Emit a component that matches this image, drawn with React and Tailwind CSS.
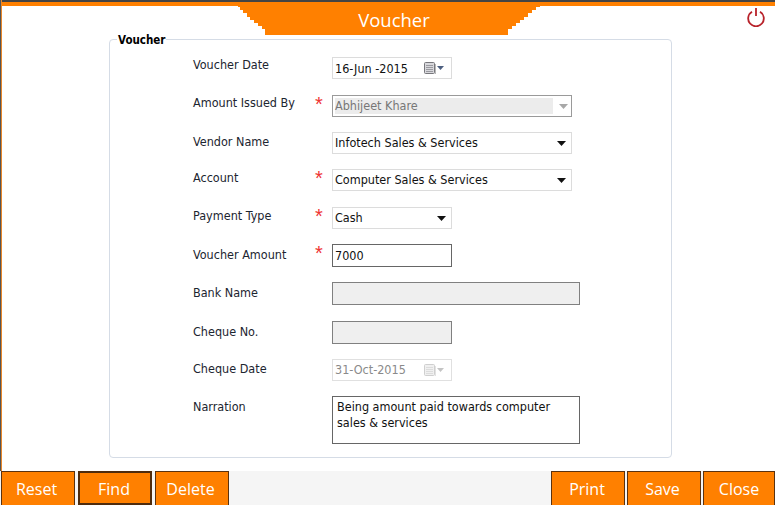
function Caret({ className = "", w = 9, h = 5 }) {
  return <svg width={w} height={h} viewBox="0 0 9 5" preserveAspectRatio="none" className={className}><path d="M0 0h9L4.5 5z" fill="currentColor" /></svg>;
}
function Cal({ muted }) {
  return (
    <svg width="14" height="14" viewBox="0 0 14 14">
      <rect x="1.5" y="1.5" width="10" height="11" rx="1" fill={muted ? "#f0f0f0" : "#d8d8dc"} stroke={muted ? "#cfcfcf" : "#77777c"} />
      <path d="M3 4.5h7M3 6.5h7M3 8.5h7M3 10.5h7" stroke={muted ? "#dcdcdc" : "#9a9aa0"} />
      <path d="M12.5 3v10" stroke={muted ? "#e2e2e2" : "#b8b8b8"} />
    </svg>
  );
}
function Star() {
  return <span className="absolute left-[-17px] top-[-2px] text-[20px] leading-[22px] text-[#ee3333] font-['Liberation_Sans',sans-serif]">*</span>;
}
function Row({ label, star, top, labelTop, children }) {
  return (
    <div className={`flex ${top}`}>
      <div className={`w-[139px] shrink-0 relative ${labelTop}`}>{label}</div>
      <div className="relative">
        {star && <Star />}
        {children}
      </div>
    </div>
  );
}
function Btn({ children, active, className = "" }) {
  return (
    <button className={`h-[34px] bg-[#ff8000] text-white text-[16px] font-['Open_Sans',sans-serif] ${active ? "border-2 border-[#4f2c0e]" : "border-t border-x border-[#5a3210]"} ${className}`}>
      {children}
    </button>
  );
}
export default function App() {
  return (
    <div className="w-[775px] h-[505px] overflow-hidden flex flex-col bg-white font-['DejaVu_Sans_Condensed','DejaVu_Sans',sans-serif] text-[12.5px] leading-[16px] text-[#1c2530]">
      <div className="flex-1 flex flex-col border-l border-[#555555]">
        <div className="flex-1 flex flex-col border-l border-[#e8872a]">
          <header className="shrink-0 relative">
            <div className="h-[2px] bg-[#444444]" />
            <div className="h-[4px] bg-[#ff8000]" />
            <div className="flex justify-center">
              <div className="relative w-[302px] h-[29px] flex items-center justify-center text-white text-[18.5px] font-['Open_Sans',sans-serif] ml-[1px]">
                <svg width="302" height="29" viewBox="0 0 302 29" className="absolute inset-0">
                  <path d="M0 0H302V1H298V4H294V7H290V11H286V14H282V17H278V20H274V23H270V29H27V23H24V20H20V17H16V14H12V11H9V7H5V4H2V1H0Z" fill="#ff8000" />
                </svg>
                <span className="relative top-[-1px] left-[5px]">Voucher</span>
              </div>
            </div>
            <svg width="20" height="20" viewBox="0 0 20 20" className="absolute right-[9px] top-[7px]" fill="none" stroke="#b8222a" strokeWidth="1.8">
              <path d="M6 4.8A7.8 7.8 0 1 0 14 4.8" />
              <path d="M10 1v8" />
            </svg>
          </header>

          <main className="flex-1 pl-[107px] pt-[4px]">
            <fieldset className="w-[563px] h-[419px] border border-[#d5dce6] rounded-[4px] relative pl-[83px] pt-[17px]">
              <span className="absolute left-[7px] top-[-7px] bg-white px-[1px] font-bold text-[11.5px] leading-[14px] text-black">Voucher</span>

              <Row label="Voucher Date" top="" labelTop="top-[0px]">
                <div className="w-[120px] h-[22px] border border-[#dcdcdc] flex items-center justify-between pl-[2px] pr-[7px] text-[#111]">
                  <span className="relative top-[1px]">16-Jun -2015</span>
                  <span className="flex items-center gap-[0px] text-[#4d5f80]"><Cal /><Caret w={7} h={4} /></span>
                </div>
              </Row>

              <Row label="Amount Issued By" star top="mt-[16px]" labelTop="top-[0px]">
                <div className="w-[240px] h-[22px] border border-[#9a9a9a] p-[2px] flex items-center text-[#777777] relative">
                  <div className="w-[218px] h-[16px] bg-[#ececec]">Abhijeet Khare</div>
                  <Caret className="absolute right-[3px] top-[8px] text-[#a8a8a8]" />
                </div>
              </Row>

              <Row label="Vendor Name" top="mt-[15px]" labelTop="top-[2px]">
                <div className="w-[240px] h-[22px] border border-[#dcdcdc] pl-[2px] pr-[5px] flex items-center justify-between text-[#111]">
                  <span>Infotech Sales &amp; Services</span><Caret className="text-[#111]" />
                </div>
              </Row>

              <Row label="Account" star top="mt-[15px]" labelTop="top-[1px]">
                <div className="w-[240px] h-[22px] border border-[#dcdcdc] pl-[2px] pr-[5px] flex items-center justify-between text-[#111]">
                  <span>Computer Sales &amp; Services</span><Caret className="text-[#111]" />
                </div>
              </Row>

              <Row label="Payment Type" star top="mt-[16px]" labelTop="top-[1px]">
                <div className="w-[120px] h-[22px] border border-[#dcdcdc] pl-[2px] pr-[5px] flex items-center justify-between text-[#111]">
                  <span>Cash</span><Caret className="text-[#111]" />
                </div>
              </Row>

              <Row label="Voucher Amount" star top="mt-[15px]" labelTop="top-[3px]">
                <div className="w-[120px] h-[23px] border border-[#666666] pl-[2px] flex items-center text-[#111]">7000</div>
              </Row>

              <Row label="Bank Name" top="mt-[15px]" labelTop="top-[3px]">
                <div className="w-[248px] h-[23px] border border-[#808080] bg-[#efefef]" />
              </Row>

              <Row label="Cheque No." top="mt-[16px]" labelTop="top-[3px]">
                <div className="w-[120px] h-[23px] border border-[#808080] bg-[#efefef]" />
              </Row>

              <Row label="Cheque Date" top="mt-[15px]" labelTop="top-[2px]">
                <div className="w-[120px] h-[22px] border border-[#e0e0e0] flex items-center justify-between pl-[2px] pr-[7px] text-[#8a8a8a]">
                  <span>31-Oct-2015</span>
                  <span className="flex items-center gap-[0px] text-[#c4c4c4]"><Cal muted /><Caret w={7} h={4} /></span>
                </div>
              </Row>

              <Row label="Narration" top="mt-[15px]" labelTop="top-[3px]">
                <div className="w-[248px] h-[48px] border border-[#666666] pl-[4px] pt-[2px] text-[#111]">
                  Being amount paid towards computer<br />sales &amp; services
                </div>
              </Row>
            </fieldset>
          </main>
        </div>
      </div>

      <footer className="shrink-0 h-[34px] bg-[#f5f5f5] flex items-end justify-between pl-[1px]">
        <div className="flex gap-[3px]">
          <Btn className="w-[74px] pr-[3px]">Reset</Btn>
          <Btn active className="w-[74px] pt-[2px] pr-[2px]">Find</Btn>
          <Btn className="w-[74px] pr-[3px]">Delete</Btn>
        </div>
        <div className="flex gap-[2px]">
          <Btn className="w-[74px] pr-[2px]">Print</Btn>
          <Btn className="w-[74px] pr-[3px]">Save</Btn>
          <Btn className="w-[72px]">Close</Btn>
        </div>
      </footer>
    </div>
  );
}
